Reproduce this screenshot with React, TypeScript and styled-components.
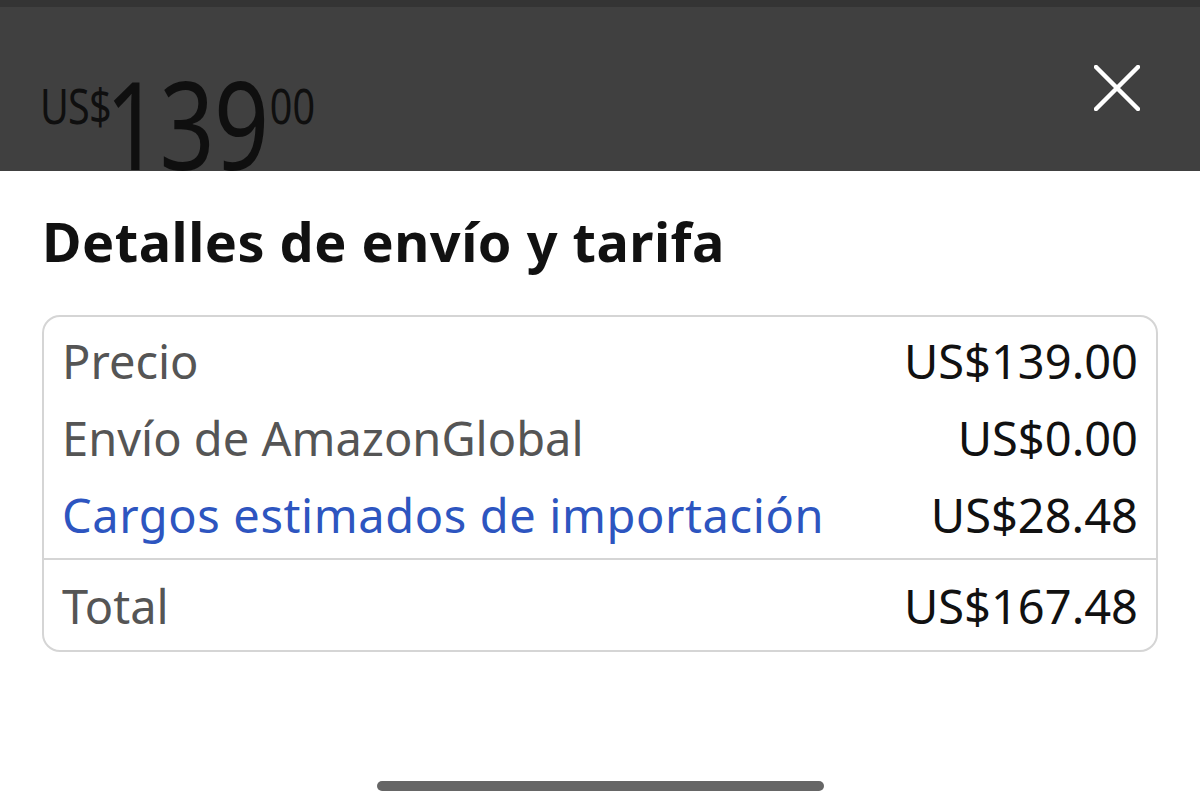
import React from "react";
import styled, { createGlobalStyle } from "styled-components";

const GlobalStyle = createGlobalStyle`
  html, body {
    margin: 0;
    padding: 0;
    background: #fff;
  }
  body {
    font-family: "Noto Sans", "Open Sans", sans-serif;
  }
`;

const Screen = styled.div`
  width: 1200px;
  height: 809px;
  display: flex;
  flex-direction: column;
  overflow: hidden;
  background: #fff;
`;

const Header = styled.header`
  height: 171px;
  box-sizing: border-box;
  background: #404040;
  border-top: 7px solid #343434;
  display: flex;
  align-items: flex-start;
  justify-content: space-between;
  padding: 0 60px 0 40px;
`;

/* the price face is condensed, so the row is squeezed horizontally */
const Price = styled.div`
  display: flex;
  align-items: flex-start;
  color: #0f0f0f;
  line-height: 1;
  margin-top: 62px;
  transform: scaleX(0.79);
  transform-origin: left top;
`;

const Currency = styled.span`
  font-size: 50px;
  margin-top: 11px;
  letter-spacing: -1px;
`;

const Whole = styled.span`
  font-size: 122px;
  letter-spacing: -1px;
  margin-top: -7px;
  margin-left: -7px;
`;

const Cents = styled.span`
  font-size: 50px;
  margin-top: 11px;
  margin-left: 2px;
`;

const CloseButton = styled.button`
  border: none;
  background: none;
  padding: 0;
  margin-top: 58px;
  width: 46px;
  height: 46px;
  cursor: pointer;
`;

const Body = styled.main`
  padding: 39px 42px 0 42px;
  flex: 1;
  display: flex;
  flex-direction: column;
`;

const Title = styled.h1`
  margin: 0;
  font-size: 54px;
  font-weight: 700;
  color: #111;
  line-height: 62px;
  letter-spacing: 0.5px;
`;

const Card = styled.section`
  margin-top: 43px;
  border: 2px solid #d5d5d5;
  border-radius: 18px;
  display: flex;
  flex-direction: column;
  overflow: hidden;
`;

const Group = styled.div<{ $divided?: boolean }>`
  padding: ${(p) => (p.$divided ? "8px 18px 5px" : "6px 18px 4px")};
  border-top: ${(p) => (p.$divided ? "2px solid #d5d5d5" : "none")};
  display: flex;
  flex-direction: column;
`;

const Row = styled.div`
  display: flex;
  justify-content: space-between;
  align-items: baseline;
  height: 77px;
  line-height: 77px;
`;

const Label = styled.span<{ $link?: boolean }>`
  font-size: 47px;
  letter-spacing: ${(p) => (p.$link ? "0.6px" : "0")};
  color: ${(p) => (p.$link ? "#2d55c0" : "#555")};
`;

const Value = styled.span`
  font-size: 47px;
  color: #111;
`;

const HomeBar = styled.div`
  align-self: center;
  margin-top: auto;
  margin-bottom: 18px;
  width: 447px;
  height: 10px;
  border-radius: 5px;
  background: #666;
`;

const lines = [
  { label: "Precio", value: "US$139.00" },
  { label: "Envío de AmazonGlobal", value: "US$0.00" },
  { label: "Cargos estimados de importación", value: "US$28.48", link: true },
];

export default function App() {
  return (
    <>
      <GlobalStyle />
      <Screen>
        <Header>
          <Price>
            <Currency>US$</Currency>
            <Whole>139</Whole>
            <Cents>00</Cents>
          </Price>
          <CloseButton aria-label="Cerrar">
            <svg width="46" height="46" viewBox="0 0 46 46">
              <path
                d="M2 2 L44 44 M44 2 L2 44"
                stroke="#fff"
                strokeWidth="4.5"
                strokeLinecap="round"
              />
            </svg>
          </CloseButton>
        </Header>
        <Body>
          <Title>Detalles de envío y tarifa</Title>
          <Card>
            <Group>
              {lines.map((l) => (
                <Row key={l.label}>
                  <Label $link={l.link}>{l.label}</Label>
                  <Value>{l.value}</Value>
                </Row>
              ))}
            </Group>
            <Group $divided>
              <Row>
                <Label>Total</Label>
                <Value>US$167.48</Value>
              </Row>
            </Group>
          </Card>
          <HomeBar />
        </Body>
      </Screen>
    </>
  );
}
